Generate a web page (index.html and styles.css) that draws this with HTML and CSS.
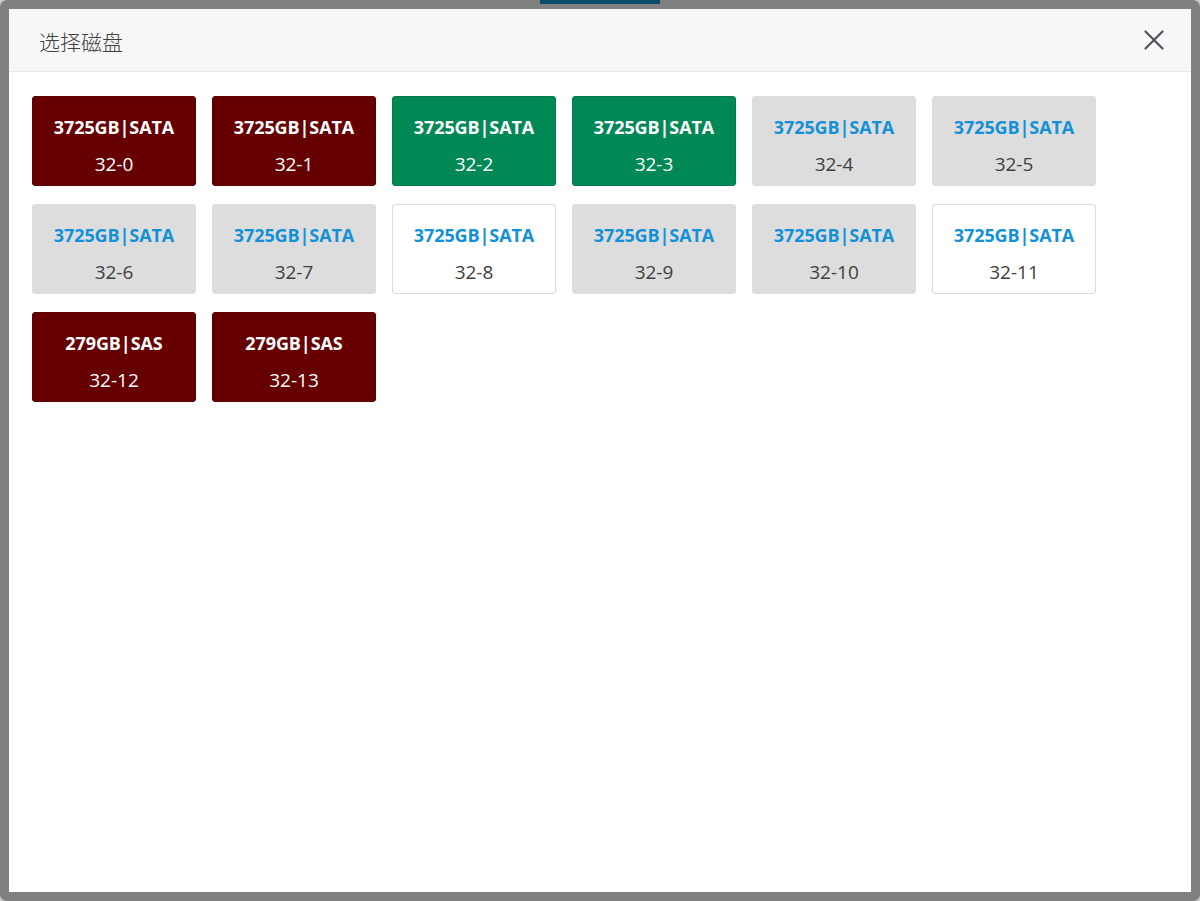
FILE: index.html
```html
<!DOCTYPE html>
<html lang="zh">
<head>
<meta charset="utf-8">
<title>选择磁盘</title>
<link rel="stylesheet" href="styles.css">
</head>
<body>
<div class="frame">
  <div class="tab-strip"></div>
  <div class="dialog">
    <div class="dialog-header">
      <span class="dialog-title">选择磁盘</span>
      <button class="close-btn" aria-label="关闭">
        <svg width="20" height="20" viewBox="0 0 20 20"><path d="M1.5 1.5 L18.5 18.5 M18.5 1.5 L1.5 18.5" stroke="#505060" stroke-width="2.2" stroke-linecap="round" fill="none"/></svg>
      </button>
    </div>
    <div class="dialog-body">
      <div class="disk-grid">
        <div class="disk disk-used"><div class="disk-size">3725GB|SATA</div><div class="disk-id">32-0</div></div>
        <div class="disk disk-used"><div class="disk-size">3725GB|SATA</div><div class="disk-id">32-1</div></div>
        <div class="disk disk-ok"><div class="disk-size">3725GB|SATA</div><div class="disk-id">32-2</div></div>
        <div class="disk disk-ok"><div class="disk-size">3725GB|SATA</div><div class="disk-id">32-3</div></div>
        <div class="disk disk-gray"><div class="disk-size">3725GB|SATA</div><div class="disk-id">32-4</div></div>
        <div class="disk disk-gray"><div class="disk-size">3725GB|SATA</div><div class="disk-id">32-5</div></div>
        <div class="disk disk-gray"><div class="disk-size">3725GB|SATA</div><div class="disk-id">32-6</div></div>
        <div class="disk disk-gray"><div class="disk-size">3725GB|SATA</div><div class="disk-id">32-7</div></div>
        <div class="disk disk-free"><div class="disk-size">3725GB|SATA</div><div class="disk-id">32-8</div></div>
        <div class="disk disk-gray"><div class="disk-size">3725GB|SATA</div><div class="disk-id">32-9</div></div>
        <div class="disk disk-gray"><div class="disk-size">3725GB|SATA</div><div class="disk-id">32-10</div></div>
        <div class="disk disk-free"><div class="disk-size">3725GB|SATA</div><div class="disk-id">32-11</div></div>
        <div class="disk disk-used"><div class="disk-size">279GB|SAS</div><div class="disk-id">32-12</div></div>
        <div class="disk disk-used"><div class="disk-size">279GB|SAS</div><div class="disk-id">32-13</div></div>
      </div>
    </div>
  </div>
</div>
</body>
</html>
```
FILE: styles.css
```css
* { box-sizing: border-box; }
html, body {
  margin: 0;
  padding: 0;
  background: #c8c8c8;
}
body {
  width: 1200px;
  height: 901px;
  font-family: "Open Sans", "Noto Sans CJK SC", sans-serif;
}
.frame {
  position: relative;
  width: 1200px;
  height: 901px;
  background: #808080;
  border-radius: 7px;
  padding: 9px;
}
.tab-strip {
  position: absolute;
  left: 540px;
  top: 0;
  width: 120px;
  height: 4px;
  background: #0b4a6b;
}
.dialog {
  width: 100%;
  height: 100%;
  background: #ffffff;
  display: flex;
  flex-direction: column;
}
.dialog-header {
  height: 63px;
  background: #f7f7f7;
  border-bottom: 1px solid #e8e8e8;
  display: flex;
  align-items: center;
  justify-content: space-between;
  padding: 0 25px 0 30px;
}
.dialog-title {
  font-family: "Noto Sans CJK SC", sans-serif;
  font-size: 21px;
  font-weight: 300;
  color: #404040;
  line-height: 1;
  position: relative;
  top: 1px;
}
.close-btn {
  border: none;
  background: none;
  padding: 0;
  width: 24px;
  height: 24px;
  display: flex;
  align-items: center;
  justify-content: center;
  cursor: pointer;
}
.dialog-body {
  padding: 24px 23px;
}
.disk-grid {
  display: grid;
  grid-template-columns: repeat(6, 164px);
  column-gap: 16px;
  row-gap: 18px;
}
.disk {
  height: 90px;
  border-radius: 3px;
  border: 1px solid transparent;
  display: flex;
  flex-direction: column;
  align-items: center;
  padding-top: 17px;
}
.disk-size {
  font-size: 18px;
  font-weight: 700;
  line-height: 26px;
  letter-spacing: -0.1px;
}
.disk-id {
  font-size: 19px;
  line-height: 26px;
  margin-top: 11px;
}
.disk-used {
  background: #660000;
  border-color: #5a0000;
  color: #ffffff;
}
.disk-ok {
  background: #008855;
  border-color: #007a4c;
  color: #ffffff;
}
.disk-gray {
  background: #dddddd;
  border-color: #dddddd;
}
.disk-free {
  background: #ffffff;
  border-color: #dcdcdc;
}
.disk-gray .disk-size,
.disk-free .disk-size {
  color: #1290d8;
}
.disk-gray .disk-id,
.disk-free .disk-id {
  color: #404040;
}
```
